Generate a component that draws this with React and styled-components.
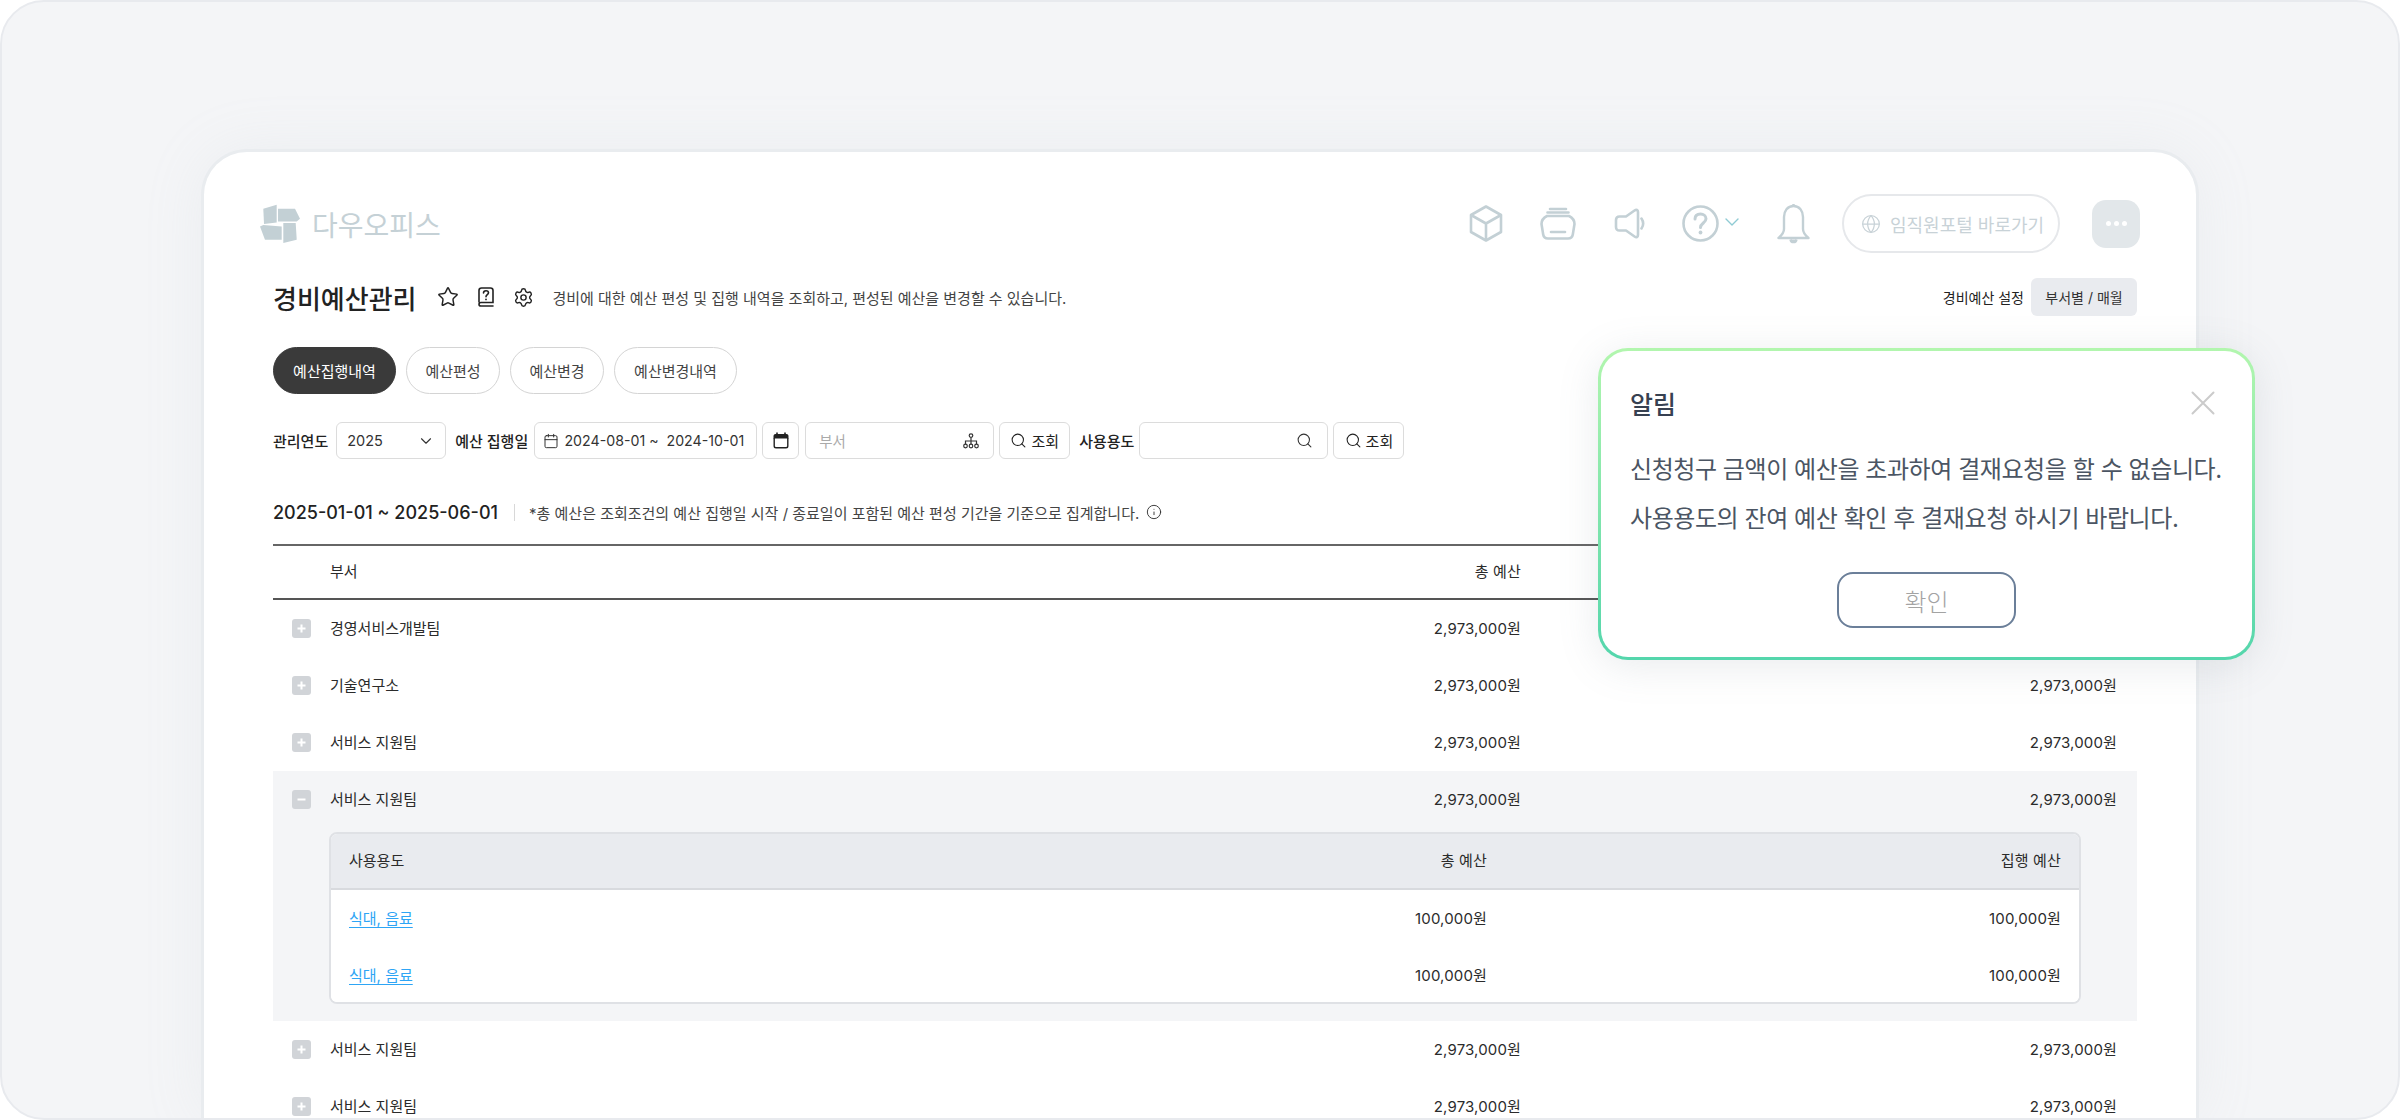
import React from 'react'
import styled, { createGlobalStyle } from 'styled-components'
import { Star, Settings, Search, ChevronDown, Globe, Info, Calendar } from 'lucide-react'

const GlobalStyle = createGlobalStyle`
  html, body {
    margin: 0;
    background: #fff;
  }
  * {
    box-sizing: border-box;
  }
  body {
    font-family: Inter, "Noto Sans CJK KR", sans-serif;
    color: #222;
  }
`

const Frame = styled.div`
  position: relative;
  width: 2400px;
  height: 1120px;
  display: flex;
  flex-direction: column;
  align-items: center;
  padding-top: 147px;
  background: #f4f5f7;
  border: 2px solid #e8eaee;
  border-radius: 44px;
  overflow: hidden;
`
const Card = styled.div`
  width: 1998px;
  flex: 1;
  padding: 42px 59px 0 69px;
  background: #fff;
  border: 3px solid #e9ecef;
  border-bottom: 0;
  border-radius: 46px 46px 0 0;
  box-shadow: 0 0 60px rgba(180, 188, 198, 0.12);
  overflow: hidden;
`
const TopBar = styled.div`
  height: 59px;
  display: flex;
  align-items: center;
  margin-right: -3px;
`
const Logo = styled.div`
  display: flex;
  align-items: center;
  gap: 11px;
  margin-left: -14px;
  margin-right: auto;
`
const LogoText = styled.span`
  font-size: 28px;
  font-weight: 400;
  color: #c5d1d6;
`
const HeaderIcon = styled.span`
  display: flex;
  align-items: center;
  margin-left: ${({ $gap }) => $gap}px;
  margin-bottom: ${({ $accent }) => ($accent ? 4 : 0)}px;
  color: ${({ $accent }) => ($accent ? '#8fcbd4' : '#c3d0d5')};
`
const PortalButton = styled.div`
  width: 218px;
  height: 59px;
  margin-left: 32px;
  display: flex;
  align-items: center;
  gap: 9px;
  padding-left: 17px;
  font-size: 18px;
  color: #c8d2d7;
  border: 2px solid #e6e8eb;
  border-radius: 30px;
`
const MoreButton = styled.div`
  width: 48px;
  height: 48px;
  margin-left: 32px;
  display: flex;
  align-items: center;
  justify-content: center;
  gap: 3px;
  background: #e2e7ea;
  border-radius: 14px;
`
const Dot = styled.i`
  width: 5px;
  height: 5px;
  border-radius: 50%;
  background: #fff;
`
const TitleRow = styled.div`
  height: 38px;
  margin-top: 25px;
  display: flex;
  align-items: center;
`
const Title = styled.h1`
  margin: 0 20px 0 0;
  font-size: 26px;
  font-weight: 500;
  color: #222;
`
const TitleIcons = styled.div`
  display: flex;
  align-items: center;
  gap: 17px;
  color: #222;
`
const Description = styled.p`
  margin: 0 auto 0 19px;
  font-size: 15px;
  letter-spacing: -0.02px;
  color: #444;
`
const SettingLabel = styled.span`
  font-size: 14px;
  color: #222;
  margin-right: 7px;
`
const SettingValue = styled.div`
  width: 106px;
  height: 38px;
  display: flex;
  align-items: center;
  justify-content: center;
  font-size: 14px;
  color: #333;
  background: #e9ebef;
  border-radius: 6px;
`
const Tabs = styled.div`
  display: flex;
  gap: 10px;
  margin-top: 31px;
`
const Tab = styled.div`
  width: ${({ $w }) => $w}px;
  height: 47px;
  display: flex;
  align-items: center;
  justify-content: center;
  font-size: 15px;
  color: ${({ $active }) => ($active ? '#fff' : '#444')};
  background: ${({ $active }) => ($active ? '#3a3a3a' : '#fff')};
  border: 1px solid ${({ $active }) => ($active ? '#3a3a3a' : '#d4d4d4')};
  border-radius: 24px;
`
const Filters = styled.div`
  height: 37px;
  margin-top: 28px;
  display: flex;
  align-items: center;
`
const FilterLabel = styled.span`
  font-size: 15px;
  font-weight: 500;
  color: #222;
  margin: 0 ${({ $right }) => $right || 6}px 0 ${({ $left }) => $left || 0}px;
  white-space: nowrap;
`
const Field = styled.div`
  flex: none;
  width: ${({ $w }) => $w}px;
  height: 37px;
  margin-left: ${({ $left }) => $left || 0}px;
  padding: 0 ${({ $pr }) => $pr || 10}px 0 ${({ $pl }) => $pl || 10}px;
  display: flex;
  align-items: center;
  justify-content: space-between;
  font-size: 14.5px;
  color: ${({ $muted }) => ($muted ? '#aaa' : '#333')};
  background: #fff;
  border: 1.5px solid #dcdcdc;
  border-radius: 6px;
`
const DateValue = styled.span`
  flex: none;
  white-space: pre;
  font-size: 14.2px;
  color: #333;
`
const IconButton = styled.div`
  width: 37px;
  height: 37px;
  margin-left: 5px;
  display: flex;
  align-items: center;
  justify-content: center;
  border: 1.5px solid #dcdcdc;
  border-radius: 6px;
`
const SearchButton = styled.div`
  flex: none;
  width: 71px;
  height: 37px;
  margin-left: 5px;
  display: flex;
  align-items: center;
  justify-content: center;
  gap: 4px;
  font-size: 15px;
  color: #222;
  border: 1.5px solid #dcdcdc;
  border-radius: 6px;
`
const RangeRow = styled.div`
  height: 20px;
  margin-top: 43px;
  display: flex;
  align-items: center;
`
const RangeText = styled.strong`
  font-size: 18px;
  font-weight: 500;
  color: #222;
`
const RangeDivider = styled.i`
  width: 1px;
  height: 17px;
  margin: 0 14px 0 16px;
  background: #d8d8d8;
`
const RangeNote = styled.span`
  font-size: 15px;
  color: #444;
  margin-right: 7px;
`
const Table = styled.div`
  margin-top: 22px;
  border-top: 2px solid #666;
`
const Row = styled.div`
  height: ${({ $head }) => ($head ? 54 : 57)}px;
  display: grid;
  grid-template-columns: 57px 791px 400px 1fr;
  align-items: center;
  padding-right: 20px;
  font-size: 15px;
  line-height: 18px;
  color: #2b2b2b;
  border-bottom: ${({ $head }) => ($head ? '2px solid #555' : '0')};
`
const Expand = styled.div`
  width: 19px;
  height: 19px;
  margin-left: 19px;
  display: flex;
  align-items: center;
  justify-content: center;
  background: #d1d4d8;
  border-radius: 3px;
`
const Name = styled.div`
  text-align: left;
`
const Amount = styled.div`
  text-align: right;
  letter-spacing: 0.15px;
`
const OpenGroup = styled.div`
  padding-bottom: 17px;
  background: #f4f5f7;
`
const SubTable = styled.div`
  width: 1752px;
  height: 172px;
  margin: 4px 0 0 56px;
  background: #fff;
  border: 2px solid #dfe1e5;
  border-radius: 8px;
  overflow: hidden;
`
const SubRow = styled.div`
  height: ${({ $head }) => ($head ? 56 : 57)}px;
  display: grid;
  grid-template-columns: 1fr 300px 574px;
  align-items: center;
  padding: 0 18px;
  font-size: 15px;
  line-height: 18px;
  color: #2b2b2b;
  background: ${({ $head }) => ($head ? '#e9ebef' : '#fff')};
  border-bottom: ${({ $head }) => ($head ? '2px solid #d8dade' : '0')};
`
const UsageLink = styled.a`
  justify-self: start;
  color: #2ea5f5;
  text-decoration: underline;
  text-underline-offset: 3px;
`
const Modal = styled.div`
  position: absolute;
  left: 1596px;
  top: 346px;
  width: 657px;
  height: 312px;
  padding: 30px 29px 0;
  background: linear-gradient(#fff, #fff) padding-box, linear-gradient(#b2f6ae, #54d6ac) border-box;
  border: 3px solid transparent;
  border-radius: 30px;
  box-shadow: 0 6px 40px rgba(120, 130, 140, 0.16);
`
const ModalHead = styled.div`
  height: 44px;
  display: flex;
  align-items: center;
  justify-content: space-between;
  padding-right: 8px;
`
const ModalTitle = styled.h2`
  margin: 0;
  font-size: 25px;
  font-weight: 500;
  color: #374151;
`
const ModalBody = styled.div`
  margin-top: 20px;
  font-size: 24px;
  letter-spacing: -0.44px;
  line-height: 49px;
  color: #4b5563;
  white-space: nowrap;
`
const ModalButton = styled.div`
  width: 179px;
  height: 56px;
  margin: 29px auto 0;
  display: flex;
  align-items: center;
  justify-content: center;
  font-size: 24px;
  font-weight: 300;
  color: #a3a3a3;
  border: 2px solid #6b7f99;
  border-radius: 16px;
`

const tabs = [
  { label: '예산집행내역', w: 123 },
  { label: '예산편성', w: 94 },
  { label: '예산변경', w: 94 },
  { label: '예산변경내역', w: 123 },
]
const teamsTop = ['경영서비스개발팀', '기술연구소', '서비스 지원팀']
const amount = '2,973,000원'

const LogoMark = () => (
  <svg width="42" height="42" viewBox="0 0 42 42" fill="#c3d0d5">
    <path d="M4.3 5.7 17.7 1.7V19.5L5 21Z" />
    <path d="M19 5.7H36L41 15.7 37.7 18.5H19Z" />
    <path d="M24.3 20H36.7L37.7 36.7 24.3 40Z" />
    <path d="M1 23.5 4.3 22 22.7 23.5V36.7H6Z" />
  </svg>
)

const Cube = () => (
  <svg width="36" height="37" viewBox="0 0 36 37" fill="none" stroke="currentColor" strokeWidth="2.6" strokeLinejoin="round">
    <path d="M18 1.5 33 10V27L18 35.5 3 27V10Z" />
    <path d="M3 10 18 18.5 33 10M18 18.5V35.5" />
  </svg>
)

const Jar = () => (
  <svg width="36" height="33" viewBox="0 0 36 33" fill="none" stroke="currentColor" strokeWidth="2.6" strokeLinecap="round" strokeLinejoin="round">
    <path d="M10 2H26M7.5 5.5H28.5" />
    <path d="M7 9H29C32 10.5 34.5 13.5 34.5 17L32.8 27.5C32.3 30.5 31 31.5 28 31.5H8C5 31.5 3.7 30.5 3.2 27.5L1.5 17C1.5 13.5 4 10.5 7 9Z" />
    <path d="M11 25H25" />
  </svg>
)

const Speaker = () => (
  <svg width="32" height="31" viewBox="0 0 32 31" fill="none" stroke="currentColor" strokeWidth="2.6" strokeLinecap="round" strokeLinejoin="round">
    <path d="M12 8.5 20.5 2.5C22.5 1.2 24 2 24 4V27C24 29 22.5 29.8 20.5 28.5L12 22.5H5.5C3.2 22.5 2 21.3 2 19V12C2 9.7 3.2 8.5 5.5 8.5Z" />
    <path d="M27.5 10.5C29.5 13.5 29.5 17.5 27.5 20.5" />
  </svg>
)

const Help = () => (
  <svg width="37" height="37" viewBox="0 0 37 37" fill="none" stroke="currentColor" strokeWidth="2.6" strokeLinecap="round">
    <circle cx="18.5" cy="18.5" r="17" />
    <path d="M13 14C13 10.5 15.5 9 18.5 9 21.5 9 24 11 24 13.8 24 18 18.5 18 18.5 22.5" strokeWidth="3" />
    <circle cx="18.5" cy="27.5" r="1.9" fill="currentColor" stroke="none" />
  </svg>
)

const Bell = () => (
  <svg width="33" height="41" viewBox="0 0 33 41" fill="none" stroke="currentColor" strokeWidth="2.4" strokeLinejoin="round">
    <path d="M16.5 3C10.5 3 7 8 7 14V26C7 29.5 4.5 32.5 1.5 35H31.5C28.5 32.5 26 29.5 26 26V14C26 8 22.5 3 16.5 3Z" />
    <path d="M16.5 1V3" />
    <path d="M13.5 36.5C14 40 19 40 19.5 36.5" fill="currentColor" />
  </svg>
)

const GuideBook = () => (
  <svg width="20" height="20" viewBox="0 0 20 20" fill="none" stroke="#222" strokeWidth="1.6" strokeLinecap="round">
    <path d="M3 15V3.5C3 2 4 1 5.5 1H14.5C16 1 17 2 17 3.5V15.5H5C3.8 15.5 3 16.3 3 17.2 3 18.2 3.8 19 5 19H17" />
    <path d="M7.5 6C7.5 4.5 8.7 3.7 10 3.7 11.4 3.7 12.5 4.6 12.5 5.8 12.5 7.6 10 7.7 10 9.8" />
    <circle cx="10" cy="12.4" r="0.9" fill="#222" stroke="none" />
  </svg>
)

const FilledCalendar = () => (
  <svg width="16" height="17" viewBox="0 0 16 17">
    <path d="M4 0.5V3M12 0.5V3" stroke="#222" strokeWidth="1.6" />
    <path d="M2.5 2H13.5C14.6 2 15.5 2.9 15.5 4V6.5H0.5V4C0.5 2.9 1.4 2 2.5 2Z" fill="#222" />
    <path d="M1.2 6V14C1.2 15.2 2 15.8 3 15.8H13C14 15.8 14.8 15.2 14.8 14V6" fill="none" stroke="#222" strokeWidth="1.4" />
  </svg>
)

const OrgTree = () => (
  <svg width="16" height="16" viewBox="0 0 16 16" fill="none" stroke="#333" strokeWidth="1.2">
    <circle cx="8" cy="2.6" r="1.8" />
    <circle cx="2.5" cy="13" r="1.8" />
    <circle cx="8" cy="13" r="1.8" />
    <circle cx="13.5" cy="13" r="1.8" />
    <path d="M8 4.4V11.2M2.5 11.2V8H13.5V11.2" />
  </svg>
)

const Plus = () => (
  <svg width="9" height="9" viewBox="0 0 9 9" stroke="#fff" strokeWidth="2">
    <path d="M4.5 0.5V8.5M0.5 4.5H8.5" />
  </svg>
)

const Minus = () => (
  <svg width="9" height="9" viewBox="0 0 9 9" stroke="#fff" strokeWidth="2">
    <path d="M0.5 4.5H8.5" />
  </svg>
)

const CloseMark = () => (
  <svg width="24" height="24" viewBox="0 0 24 24" stroke="#cbcbcb" strokeWidth="2" strokeLinecap="round">
    <path d="M1.5 1.5 22.5 22.5M22.5 1.5 1.5 22.5" />
  </svg>
)

const TeamRow = ({ name, open }) => (
  <Row>
    <Expand>{open ? <Minus /> : <Plus />}</Expand>
    <Name>{name}</Name>
    <Amount>{amount}</Amount>
    <Amount>{amount}</Amount>
  </Row>
)

export default function App() {
  return (
    <>
      <GlobalStyle />
      <Frame>
        <Card>
          <TopBar>
            <Logo>
              <LogoMark />
              <LogoText>다우오피스</LogoText>
            </Logo>
            <HeaderIcon $gap={0}><Cube /></HeaderIcon>
            <HeaderIcon $gap={36}><Jar /></HeaderIcon>
            <HeaderIcon $gap={38}><Speaker /></HeaderIcon>
            <HeaderIcon $gap={36}><Help /></HeaderIcon>
            <HeaderIcon $gap={1} $accent><ChevronDown size={24} strokeWidth={1.4} /></HeaderIcon>
            <HeaderIcon $gap={33}><Bell /></HeaderIcon>
            <PortalButton>
              <Globe size={20} strokeWidth={1.5} />
              임직원포털 바로가기
            </PortalButton>
            <MoreButton>
              <Dot />
              <Dot />
              <Dot />
            </MoreButton>
          </TopBar>

          <TitleRow>
            <Title>경비예산관리</Title>
            <TitleIcons>
              <Star size={22} strokeWidth={1.6} />
              <GuideBook />
              <Settings size={21} strokeWidth={1.6} />
            </TitleIcons>
            <Description>경비에 대한 예산 편성 및 집행 내역을 조회하고, 편성된 예산을 변경할 수 있습니다.</Description>
            <SettingLabel>경비예산 설정</SettingLabel>
            <SettingValue>부서별 / 매월</SettingValue>
          </TitleRow>

          <Tabs>
            {tabs.map((t, i) => (
              <Tab key={t.label} $w={t.w} $active={i === 0}>{t.label}</Tab>
            ))}
          </Tabs>

          <Filters>
            <FilterLabel $right={8}>관리연도</FilterLabel>
            <Field $w={110}>
              2025
              <ChevronDown size={18} strokeWidth={1.5} />
            </Field>
            <FilterLabel $left={9}>예산 집행일</FilterLabel>
            <Field $w={223} $pl={8} $pr={12}>
              <Calendar size={16} strokeWidth={1.5} />
              <DateValue>2024-08-01 ~  2024-10-01</DateValue>
            </Field>
            <IconButton><FilledCalendar /></IconButton>
            <Field $w={189} $left={6} $muted $pl={13} $pr={14}>
              부서
              <OrgTree />
            </Field>
            <SearchButton>
              <Search size={17} strokeWidth={1.5} />
              조회
            </SearchButton>
            <FilterLabel $left={9} $right={5}>사용용도</FilterLabel>
            <Field $w={189} $pr={14}>
              <span />
              <Search size={17} strokeWidth={1.5} />
            </Field>
            <SearchButton>
              <Search size={17} strokeWidth={1.5} />
              조회
            </SearchButton>
          </Filters>

          <RangeRow>
            <RangeText>2025-01-01 ~ 2025-06-01</RangeText>
            <RangeDivider />
            <RangeNote>*총 예산은 조회조건의 예산 집행일 시작 / 종료일이 포함된 예산 편성 기간을 기준으로 집계합니다.</RangeNote>
            <Info size={16} strokeWidth={1.4} color="#333" />
          </RangeRow>

          <Table>
            <Row $head>
              <span />
              <Name>부서</Name>
              <Amount>총 예산</Amount>
              <Amount>집행 예산</Amount>
            </Row>
            {teamsTop.map((t) => (
              <TeamRow key={t} name={t} />
            ))}
            <OpenGroup>
              <TeamRow name="서비스 지원팀" open />
              <SubTable>
                <SubRow $head>
                  <span>사용용도</span>
                  <Amount>총 예산</Amount>
                  <Amount>집행 예산</Amount>
                </SubRow>
                {[0, 1].map((i) => (
                  <SubRow key={i}>
                    <UsageLink>식대, 음료</UsageLink>
                    <Amount>100,000원</Amount>
                    <Amount>100,000원</Amount>
                  </SubRow>
                ))}
              </SubTable>
            </OpenGroup>
            <TeamRow name="서비스 지원팀" />
            <TeamRow name="서비스 지원팀" />
          </Table>
        </Card>

        <Modal>
          <ModalHead>
            <ModalTitle>알림</ModalTitle>
            <CloseMark />
          </ModalHead>
          <ModalBody>
            신청청구 금액이 예산을 초과하여 결재요청을 할 수 없습니다.
            <br />
            사용용도의 잔여 예산 확인 후 결재요청 하시기 바랍니다.
          </ModalBody>
          <ModalButton>확인</ModalButton>
        </Modal>
      </Frame>
    </>
  )
}
